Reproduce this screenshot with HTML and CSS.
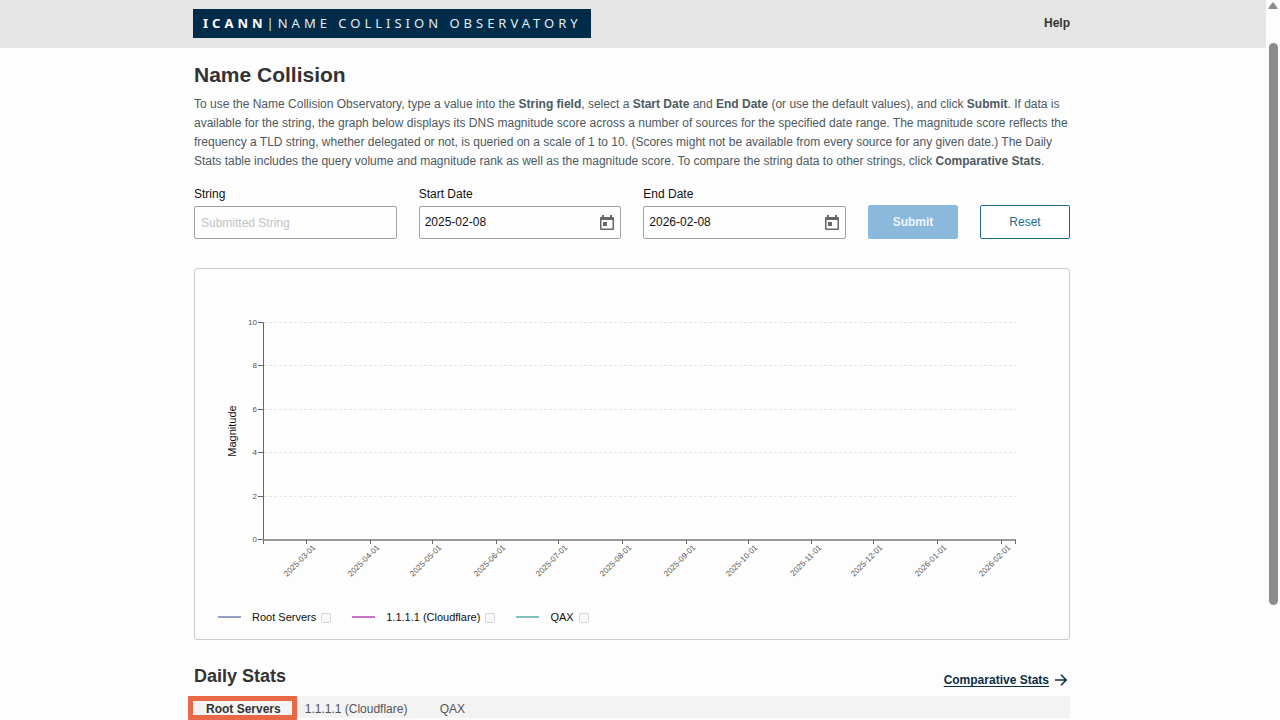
FILE: index.html
```html
<!DOCTYPE html>
<html lang="en">

<head>
    <meta charset="UTF-8" />
    <meta name="viewport" content="width=device-width, initial-scale=1.0" />
    <title>Name Collision Observatory</title>
    <link rel="stylesheet" href="styles.css">
</head>

<body>
    <div class="page">
        <header class="header">
            <div class="wrap header-row">
                <a class="logo" href="#"><b>ICANN</b>|NAME COLLISION OBSERVATORY</a>
                <a class="help" href="#">Help</a>
            </div>
        </header>

        <main class="wrap">
            <h1>Name Collision</h1>
            <p class="intro">To use the Name Collision Observatory, type a value into the <b>String field</b>, select a <b>Start Date</b> and <b>End Date</b> (or use the default values), and click <b>Submit</b>. If data is available for the string, the graph below displays its DNS magnitude score across a number of sources for the specified date range. The magnitude score reflects the frequency a TLD string, whether delegated or not, is queried on a scale of 1 to 10. (Scores might not be available from every source for any given date.) The Daily Stats table includes the query volume and magnitude rank as well as the magnitude score. To compare the string data to other strings, click <b>Comparative Stats</b>.</p>

            <form class="search">
                <div class="field">
                    <label for="string">String</label>
                    <div class="box">
                        <input type="text" id="string" placeholder="Submitted String" />
                    </div>
                </div>
                <div class="field">
                    <label for="start">Start Date</label>
                    <div class="box">
                        <input class="date" type="text" id="start" value="2025-02-08" />
                        <button class="cal" type="button" aria-label="Pick start date">
                            <svg viewBox="0 0 14 16" width="14" height="16">
                                <path fill="#666" fill-rule="evenodd" d="M2 0h2v2h6V0h2v2h1q1 0 1 1v11q0 1-1 1H1q-1 0-1-1V3q0-1 1-1h1zM1.500 5v8.500h11V5z" />
                                <path fill="#666" d="M3 7h4v4H3z" />
                            </svg>
                        </button>
                    </div>
                </div>
                <div class="field">
                    <label for="end">End Date</label>
                    <div class="box">
                        <input class="date" type="text" id="end" value="2026-02-08" />
                        <button class="cal" type="button" aria-label="Pick end date">
                            <svg viewBox="0 0 14 16" width="14" height="16">
                                <path fill="#666" fill-rule="evenodd" d="M2 0h2v2h6V0h2v2h1q1 0 1 1v11q0 1-1 1H1q-1 0-1-1V3q0-1 1-1h1zM1.500 5v8.500h11V5z" />
                                <path fill="#666" d="M3 7h4v4H3z" />
                            </svg>
                        </button>
                    </div>
                </div>
                <button class="btn submit" type="submit" disabled>Submit</button>
                <button class="btn reset" type="reset">Reset</button>
            </form>

            <section class="chart">
                <svg class="plot" viewBox="0 0 874 330">
                    <g class="grid">
                        <path d="M69 53.500H821M69 96.500H821M69 140.500H821M69 183.500H821M69 227.500H821" />
                    </g>
                    <g class="axis">
                        <path d="M63 53.500H68.500V270.500H63M63 96.500H68M63 140.500H68M63 183.500H68M63 227.500H68" />
                        <path class="base" d="M68 271H821" />
                        <path d="M68.500 271V275M111.500 271V275M175.500 271V275M237.500 271V275M301.500 271V275M363.500 271V275M427.500 271V275M491.500 271V275M553.500 271V275M616.500 271V275M678.500 271V275M742.500 271V275M806.500 271V275M820.500 271V275" />
                    </g>
                    <g class="ticks">
                        <text x="62" y="56">10</text>
                        <text x="62" y="99">8</text>
                        <text x="62" y="143">6</text>
                        <text x="62" y="186">4</text>
                        <text x="62" y="230">2</text>
                        <text x="62" y="273">0</text>
                        <text transform="translate(121 279) rotate(-45)">2025-03-01</text>
                        <text transform="translate(185 279) rotate(-45)">2025-04-01</text>
                        <text transform="translate(247 279) rotate(-45)">2025-05-01</text>
                        <text transform="translate(311 279) rotate(-45)">2025-06-01</text>
                        <text transform="translate(373 279) rotate(-45)">2025-07-01</text>
                        <text transform="translate(437 279) rotate(-45)">2025-08-01</text>
                        <text transform="translate(501 279) rotate(-45)">2025-09-01</text>
                        <text transform="translate(563 279) rotate(-45)">2025-10-01</text>
                        <text transform="translate(627 279) rotate(-45)">2025-11-01</text>
                        <text transform="translate(688 279) rotate(-45)">2025-12-01</text>
                        <text transform="translate(752 279) rotate(-45)">2026-01-01</text>
                        <text transform="translate(816 279) rotate(-45)">2026-02-01</text>
                    </g>
                    <text class="axis-title" transform="translate(41 162) rotate(-90)">Magnitude</text>
                </svg>
                <div class="legend">
                    <label><span class="line root"></span>Root Servers<input type="checkbox" disabled /></label>
                    <label><span class="line cloud"></span>1.1.1.1 (Cloudflare)<input type="checkbox" disabled /></label>
                    <label><span class="line qax"></span>QAX<input type="checkbox" disabled /></label>
                </div>
            </section>

            <div class="stats-head">
                <h2>Daily Stats</h2>
                <a class="compare" href="#"><span>Comparative Stats</span>
                    <svg viewBox="0 0 12 12" width="12" height="12">
                        <path fill="none" stroke="#0b2f45" stroke-width="1.600" d="M0 6H11M6 .8L11.200 6L6 11.200" />
                    </svg>
                </a>
            </div>
            <div class="tabs">
                <button class="tab active">Root Servers</button>
                <button class="tab">1.1.1.1 (Cloudflare)</button>
                <button class="tab">QAX</button>
            </div>
        </main>
    </div>
    <div class="scrollbar">
        <svg viewBox="0 0 10 7" width="10" height="7">
            <path fill="#8b8b8b" d="M4 1Q5-.5 6 1L9.500 6Q9.700 7 9 7H1Q.3 7 .5 6z" />
        </svg>
        <div class="thumb"></div>
    </div>
</body>

</html>
```

FILE: styles.css
```css
* {
    box-sizing: border-box;
}

body {
    margin: 0;
    height: 100vh;
    overflow: hidden;
    display: grid;
    grid-template-columns: 1fr 14px;
    background-color: #fdfdfd;
    color: #333;
    font-family: "Liberation Sans", Arial, sans-serif;
    font-size: 12px;
}

input,
button {
    font-family: inherit;
    font-size: 12px;
}

.wrap {
    max-width: 878px;
    margin: 0 auto;
    padding-right: 2px;
}

.header {
    background-color: #e5e5e5;
}

.header-row {
    display: flex;
    justify-content: space-between;
    align-items: center;
    height: 48px;
    padding-bottom: 2px;
}

.logo {
    height: 29px;
    margin-left: -1px;
    padding: 0 9px 0 10px;
    background-color: #002b49;
    color: #e4edf3;
    font-family: "Noto Sans", sans-serif;
    font-size: 13px;
    line-height: 28px;
    letter-spacing: 4px;
    text-decoration: none;
    white-space: nowrap;
}

.logo b {
    color: white;
}

.help {
    color: #333;
    font-weight: bold;
    text-decoration: none;
}

h1 {
    margin: 15px 0 8px;
    font-size: 21px;
    line-height: 24px;
}

.intro {
    margin: 0 0 15px;
    color: #4d5a60;
    line-height: 19px;
}

.search {
    display: flex;
    align-items: flex-end;
    gap: 22px;
}

.field {
    flex: 1;
    color: #111;
}

.field label {
    display: block;
    margin-bottom: 4px;
    line-height: 16px;
}

.box {
    display: flex;
    align-items: center;
    height: 33px;
    border: 1px solid #a2a2a2;
    border-radius: 2px;
}

.box input {
    flex: 1;
    min-width: 0;
    height: 31px;
    padding: 0 6px;
    border: none;
    outline: none;
    background: none;
    color: #111;
}

.box .date {
    padding: 0 5px 2px;
}

.box input::placeholder {
    color: #c4c4c4;
}

.cal {
    display: flex;
    padding: 0 6px;
    border: none;
    background: none;
}

.btn {
    width: 90px;
    height: 34px;
    border: 1px solid #1d6b8c;
    border-radius: 2px;
}

.submit {
    border-color: #8bb9dc;
    background-color: #8bb9dc;
    color: #eef6fb;
    font-weight: bold;
}

.reset {
    background-color: white;
    color: #1d6b8c;
}

.chart {
    margin-top: 29px;
    border: 1px solid #ccc;
    border-radius: 3px;
}

.plot {
    display: block;
    width: 100%;
}

.grid path {
    fill: none;
    stroke: #e6e6e6;
    stroke-dasharray: 3 2;
}

.axis path {
    fill: none;
    stroke: #666;
}

.axis .base {
    stroke: #999;
    stroke-width: 2;
}

.ticks text {
    fill: #555;
    font-size: 8px;
    text-anchor: end;
}

.axis-title {
    fill: #111;
    font-size: 11px;
    text-anchor: middle;
}

.legend {
    display: flex;
    gap: 21px;
    height: 40px;
    padding: 10px 23px;
    color: #111;
    font-size: 11px;
}

.legend label {
    display: flex;
    align-items: center;
    height: 16px;
}

.line {
    width: 23px;
    height: 2px;
    margin-right: 11px;
}

.root {
    background-color: #94a0bf;
}

.cloud {
    background-color: #c873c5;
}

.qax {
    background-color: #7fc1bf;
}

.legend input {
    appearance: none;
    width: 10px;
    height: 10px;
    margin: 1px 0 0 5px;
    border: 1px solid #d5d5d5;
    border-radius: 2px;
    background-color: #f8f8f8;
}

.stats-head {
    display: flex;
    justify-content: space-between;
    align-items: center;
    height: 56px;
    padding: 16px 3px 0 0;
}

h2 {
    margin: 0;
    font-size: 18px;
}

.compare {
    display: flex;
    align-items: center;
    gap: 6px;
    padding-top: 8px;
    color: #0b2f45;
    font-weight: bold;
    text-decoration: none;
}

.compare span {
    text-decoration: underline;
    text-underline-offset: 2px;
}

.tabs {
    position: relative;
    display: flex;
    height: 22px;
    background-color: #f3f3f3;
}

.tab {
    min-width: 66px;
    padding: 3px 12px 0;
    border: none;
    background: none;
    color: #555;
}

.active {
    color: #333;
    font-weight: bold;
}

/* highlight frame over the selected tab */
.active::after {
    content: "";
    box-sizing: border-box;
    position: absolute;
    top: 0;
    left: -6px;
    width: 109px;
    height: 24px;
    border: 5px solid #e96848;
    border-radius: 1px;
}

.scrollbar {
    display: flex;
    flex-direction: column;
    align-items: center;
    padding-top: 2px;
}

.thumb {
    width: 9px;
    height: 78vh;
    margin-top: 34px;
    border-radius: 5px;
    background-color: #8b8b8b;
}
```
